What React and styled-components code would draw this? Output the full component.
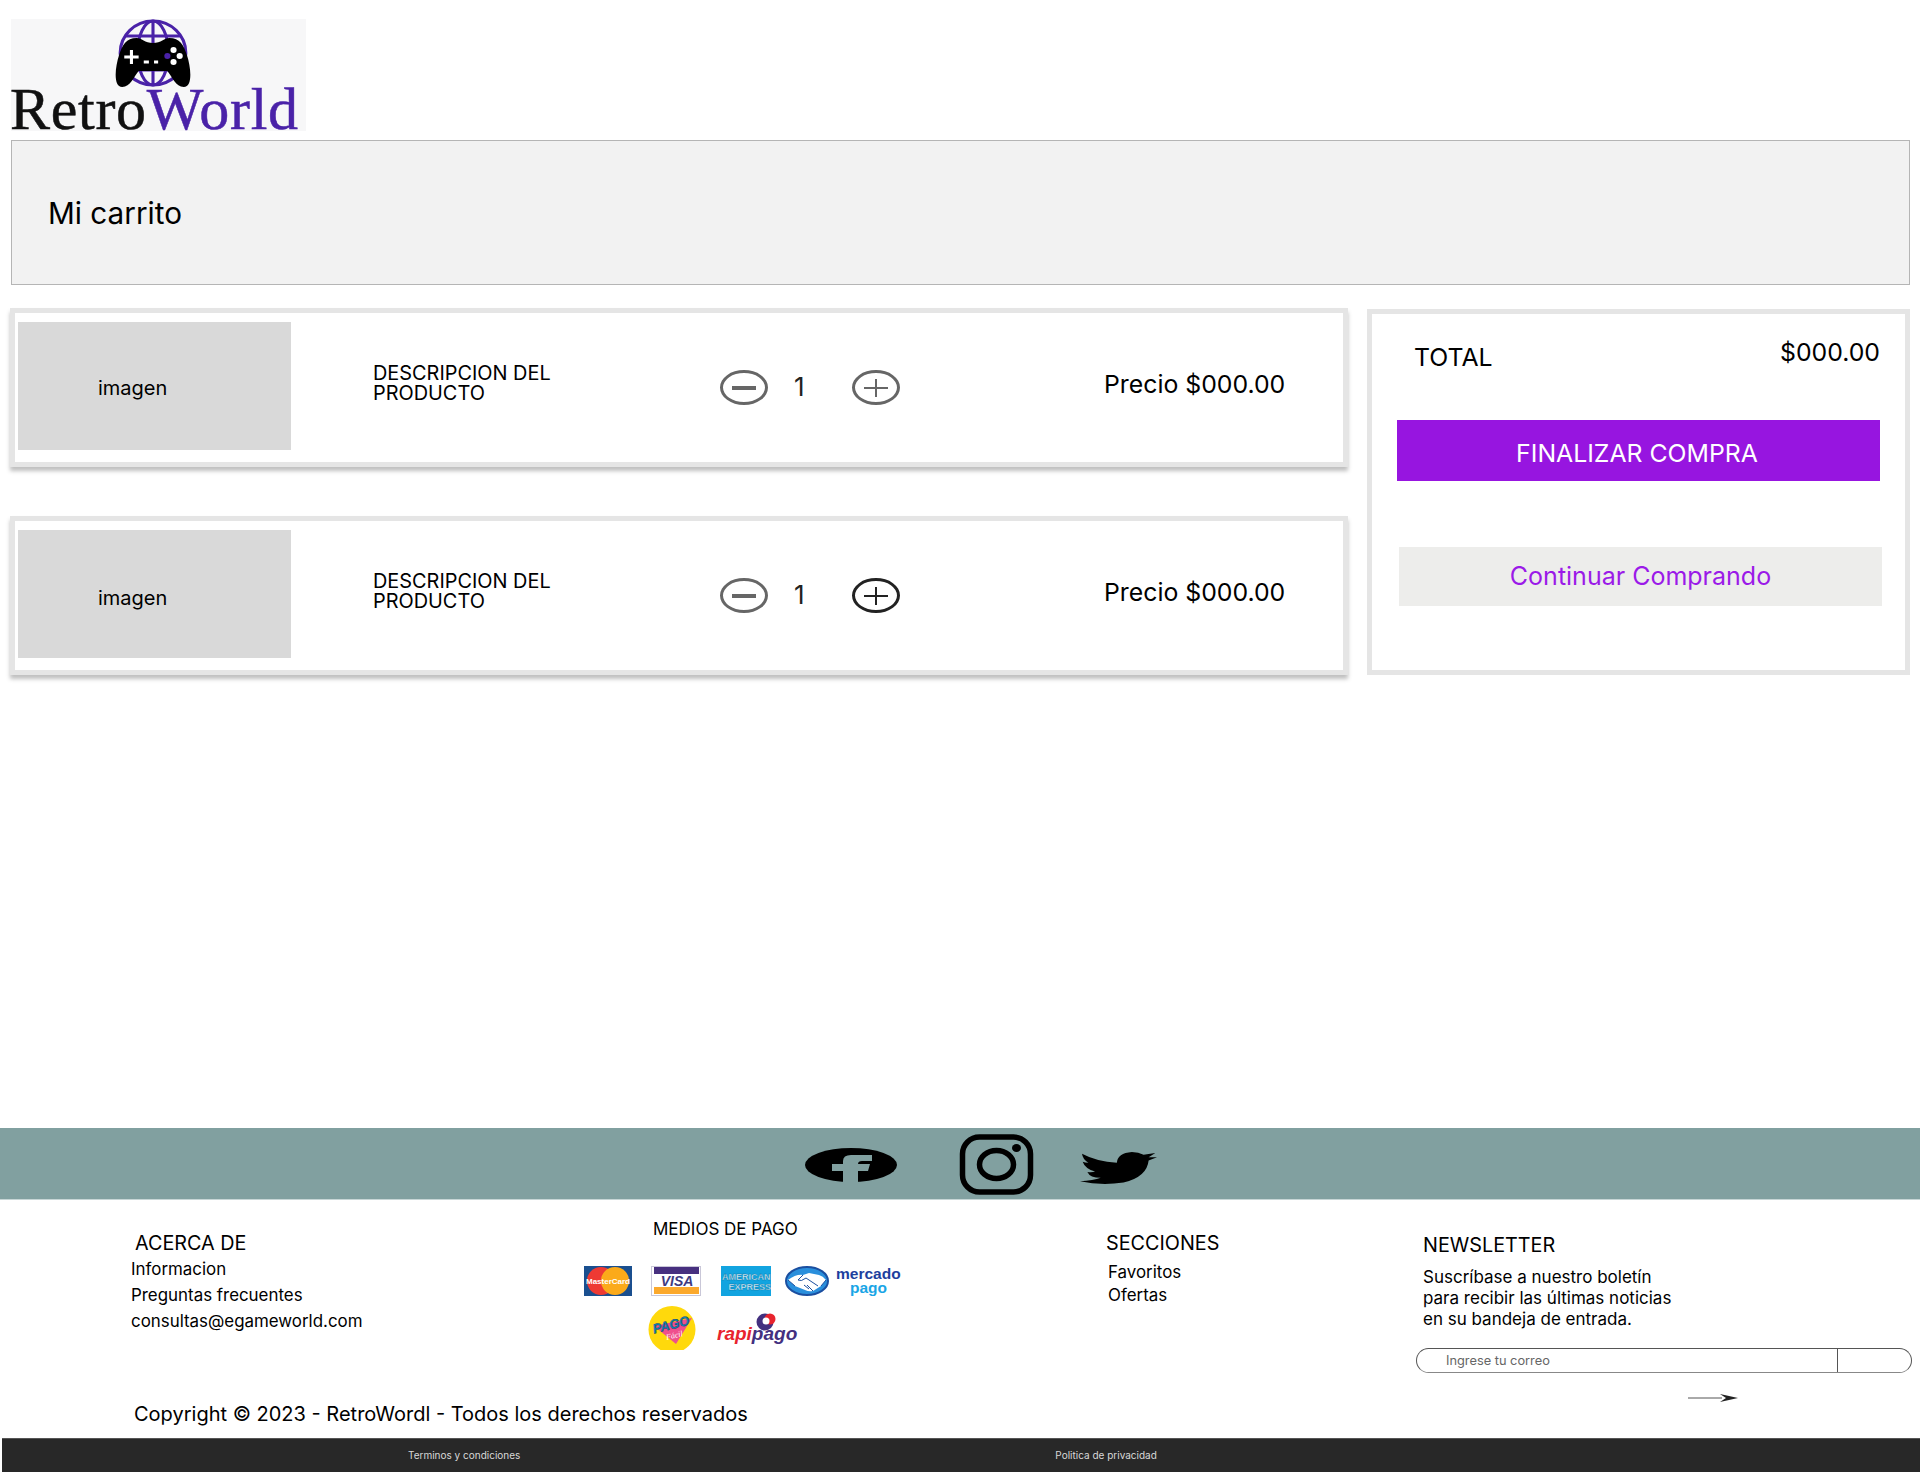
import React from "react";
import styled, { createGlobalStyle } from "styled-components";

const GlobalStyle = createGlobalStyle`
  html, body {
    margin: 0;
    padding: 0;
    background: #fff;
  }
  body {
    font-family: Inter, "Noto Sans", sans-serif;
    color: #000;
  }
  * {
    box-sizing: border-box;
  }
`;

const Page = styled.div`
  width: 1920px;
  min-height: 1472px;
  display: flex;
  flex-direction: column;
`;

/* header */
const Header = styled.header`
  padding: 19px 0 0 11px;
`;

const Logo = styled.div`
  width: 295px;
  height: 112px;
  background: #f7f7f8;
  display: flex;
  flex-direction: column;
`;

const LogoMark = styled.svg`
  display: block;
  width: 78px;
  height: 69px;
  margin-left: 103px;
`;

const LogoWord = styled.div`
  margin-left: -1px;
  font-family: "Liberation Serif", serif;
  font-size: 60px;
  line-height: 42px;
  letter-spacing: 0.7px;
  color: #111;
  white-space: nowrap;
  -webkit-text-stroke: 0.5px currentColor;

  span {
    color: #4a22a8;
  }
`;

const TitlePanel = styled.div`
  margin: 9px 0 0 11px;
  width: 1899px;
  height: 145px;
  padding-left: 36px;
  display: flex;
  align-items: center;
  background: #f2f2f2;
  border: 1px solid #b5b5b5;
`;

const Title = styled.h1`
  margin: 0;
  font-size: 29.7px;
  font-weight: 400;
`;

/* cart */
const Content = styled.main`
  margin-top: 23px;
  padding-left: 10px;
  display: flex;
  gap: 19px;
  align-items: flex-start;
`;

const CartList = styled.div`
  width: 1338px;
  display: flex;
  flex-direction: column;
  gap: 49px;
`;

const CartItem = styled.article`
  height: 159px;
  padding-left: 3px;
  display: flex;
  align-items: center;
  background: #fff;
  border: 5px solid #e5e5e5;
  box-shadow: 0 4px 4px rgba(0, 0, 0, 0.25);
`;

const Thumb = styled.div`
  width: 273px;
  height: 128px;
  flex: none;
  align-self: flex-start;
  margin-top: 9px;
  padding: ${(p) => p.$labelDrop}px 0 0 80px;
  display: flex;
  align-items: center;
  background: #d9d9d9;
  font-size: 20px;
`;

const Description = styled.div`
  width: 347px;
  flex: none;
  margin: 0 0 9px 82px;
  font-size: 19.9px;
  line-height: 20px;
`;

const Stepper = styled.div`
  width: 180px;
  flex: none;
  display: flex;
  align-items: center;
`;

const StepButton = styled.button`
  width: 48px;
  height: 35px;
  flex: none;
  padding: 0;
  display: flex;
  align-items: center;
  justify-content: center;
  background: none;
  border: 3px solid ${(p) => p.$color};
  border-radius: 50%;
  color: ${(p) => p.$color};
`;

const StepGlyph = styled.svg`
  display: block;
  width: 26px;
  height: 18px;
`;

const Count = styled.span`
  width: 84px;
  padding: 0 0 3px 26px;
  font-size: 26px;
  color: #222;
`;

const Price = styled.div`
  margin: 0 0 8px 204px;
  font-size: 24.8px;
  white-space: nowrap;
`;

const Summary = styled.aside`
  width: 543px;
  height: 366px;
  margin-top: 1px;
  background: #fff;
  border: 5px solid #e5e5e5;
`;

const TotalRow = styled.div`
  margin-top: 23px;
  padding: 0 25px 0 42px;
  display: flex;
  justify-content: space-between;
  align-items: flex-start;
  font-size: 24.8px;
  line-height: 30px;
`;

const TotalLabel = styled.span`
  padding-top: 5px;
`;

const ActionButton = styled.button`
  display: block;
  width: 483px;
  height: ${(p) => p.$height}px;
  margin: ${(p) => p.$top}px 0 0 ${(p) => p.$left}px;
  padding: ${(p) => p.$pad};
  background: ${(p) => p.$bg};
  color: ${(p) => p.$color};
  border: 0;
  font-family: inherit;
  font-size: ${(p) => p.$size}px;
`;

/* footer */
const Footer = styled.footer`
  margin-top: auto;
`;

const SocialBar = styled.div`
  height: 72px;
  padding-left: 805px;
  display: flex;
  align-items: flex-start;
  background: #81a0a0;
  border-bottom: 1px solid #c7d6d6;
`;

const SocialIcon = styled.svg`
  display: block;
  flex: none;
  width: ${(p) => p.$w}px;
  height: ${(p) => p.$h}px;
  margin: ${(p) => p.$top}px 0 0 ${(p) => p.$left || 0}px;
`;

const FooterGrid = styled.div`
  height: 238px;
  padding-left: 131px;
  display: grid;
  grid-template-columns: 453px 522px 310px 504px;
  grid-template-rows: 190px 48px;
`;

const Column = styled.section`
  padding-top: ${(p) => p.$top}px;
`;

const ColumnTitle = styled.h3`
  margin: 0;
  padding-left: ${(p) => p.$indent || 0}px;
  font-size: 19.8px;
  line-height: 24px;
  font-weight: 400;
`;

const LinkList = styled.ul`
  list-style: none;
  margin: ${(p) => p.$top || 0}px 0 0;
  padding: 0 0 0 ${(p) => p.$indent || 0}px;
  font-size: 16.9px;
  line-height: ${(p) => p.$line}px;
`;

const PayTitle = styled.h3`
  margin: 0;
  padding-left: 69px;
  font-size: 17px;
  line-height: 22px;
  font-weight: 400;
`;

const PayGrid = styled.div`
  margin-top: 26px;
  display: grid;
  grid-template-columns: 67px 70px 64px auto;
  grid-template-rows: 40px 44px;
  justify-items: start;
`;

const PayLogo = styled.svg`
  display: block;
  width: ${(p) => p.$w}px;
  height: ${(p) => p.$h}px;
  grid-column: ${(p) => p.$col};
  grid-row: ${(p) => p.$row};
  margin: ${(p) => p.$top || 0}px 0 0 ${(p) => p.$left || 0}px;
`;

const Newsletter = styled.section`
  grid-column: 4;
  grid-row: 1 / span 2;
  padding-top: 33px;
`;

const NewsText = styled.p`
  margin: 10px 0 0;
  padding-left: 7px;
  font-size: 17px;
  line-height: 21px;
`;

const SubscribeForm = styled.form`
  width: 496px;
  height: 25px;
  margin-top: 18px;
  display: flex;
  border: 1px solid #555;
  border-bottom-color: #888;
  border-radius: 13px;
  overflow: hidden;
`;

const EmailInput = styled.input`
  width: 421px;
  height: 100%;
  padding: 0 0 0 29px;
  background: none;
  border: 0;
  border-right: 1px solid #555;
  outline: none;
  font-family: inherit;
  font-size: 12.8px;

  &::placeholder {
    color: #666;
    opacity: 1;
  }
`;

const SendButton = styled.button`
  flex: 1;
  padding: 0;
  background: none;
  border: 0;
`;

const Arrow = styled.svg`
  display: block;
  width: 50px;
  height: 14px;
  margin: 18px 0 0 272px;
`;

const Copyright = styled.p`
  grid-column: 1 / span 3;
  grid-row: 2;
  margin: 0;
  padding-left: 3px;
  font-size: 20px;
  line-height: 48px;
`;

const LegalBar = styled.div`
  height: 34px;
  margin-left: 2px;
  padding: 0 0 2px 406px;
  display: flex;
  align-items: center;
  gap: 535px;
  background: #282828;
  border-top: 1px solid #555;
  color: #d8d8d8;
  font-size: 10px;
`;

const MinusGlyph = () => (
  <StepGlyph viewBox="0 0 26 18">
    <rect x="1" y="7" width="24" height="4" fill="currentColor" />
  </StepGlyph>
);

const PlusGlyph = () => (
  <StepGlyph viewBox="0 0 26 18">
    <path d="M1 9H25M13 0V18" stroke="currentColor" strokeWidth="2" fill="none" />
  </StepGlyph>
);

const Item = ({ labelDrop, plusColor }) => (
  <CartItem>
    <Thumb $labelDrop={labelDrop}>imagen</Thumb>
    <Description>
      DESCRIPCION DEL
      <br />
      PRODUCTO
    </Description>
    <Stepper>
      <StepButton $color="#666">
        <MinusGlyph />
      </StepButton>
      <Count>1</Count>
      <StepButton $color={plusColor}>
        <PlusGlyph />
      </StepButton>
    </Stepper>
    <Price>Precio $000.00</Price>
  </CartItem>
);

const App = () => (
  <Page>
    <GlobalStyle />
    <Header>
      <Logo>
        <LogoMark viewBox="0 0 76 69" preserveAspectRatio="none">
          <g fill="none" stroke="#4a22a8" strokeWidth="3">
            <circle cx="38" cy="34" r="32" />
            <ellipse cx="38" cy="34" rx="15" ry="32" />
            <path d="M38 2V66M11 17H65M11 51H65" />
          </g>
          <path
            d="M22 19C27 19 30 24 38 24C46 24 49 19 54 19C64 19 68 26 71 36C75 48 77 68 68 68C60 68 57 58 52 52L24 52C19 58 16 68 8 68C-1 68 1 48 5 36C8 26 12 19 22 19Z"
            fill="#000"
          />
          <path d="M10 38H24M17 31V45" stroke="#fff" strokeWidth="3" />
          <path d="M29 43H34M39 43H43" stroke="#fff" strokeWidth="3" />
          <circle cx="58" cy="31" r="3" fill="#fff" />
          <circle cx="58" cy="43" r="3" fill="#fff" />
          <circle cx="64" cy="37" r="3" fill="#fff" />
          <circle cx="52" cy="37" r="3" fill="#4a22a8" />
        </LogoMark>
        <LogoWord>
          Retro<span>World</span>
        </LogoWord>
      </Logo>
    </Header>

    <TitlePanel>
      <Title>Mi carrito</Title>
    </TitlePanel>

    <Content>
      <CartList>
        <Item labelDrop={4} plusColor="#666" />
        <Item labelDrop={8} plusColor="#222" />
      </CartList>
      <Summary>
        <TotalRow>
          <TotalLabel>TOTAL</TotalLabel>
          <span>$000.00</span>
        </TotalRow>
        <ActionButton $top={48} $left={25} $height={61} $pad="4px 3px 0 0" $size={24.8} $bg="#9715e0" $color="#fff">
          FINALIZAR COMPRA
        </ActionButton>
        <ActionButton $top={66} $left={27} $height={59} $pad="0 0 2px" $size={25} $bg="#ededeb" $color="#9b1ae8">
          Continuar Comprando
        </ActionButton>
      </Summary>
    </Content>

    <Footer>
      <SocialBar>
        <SocialIcon viewBox="0 0 92 34" preserveAspectRatio="none" $w={92} $h={34} $top={20}>
          <ellipse cx="46" cy="17" rx="46" ry="17" fill="#000" />
          <path
            d="M38 34V23H27V16H38V13Q38 7 46 7H67V13H57Q53 13 53 16H65L63 23H53V34Z"
            fill="#81a0a0"
          />
        </SocialIcon>
        <SocialIcon viewBox="0 0 74 61" $w={75} $h={61} $top={6} $left={62}>
          <g fill="none" stroke="#000" strokeWidth="5.5">
            <rect x="3" y="3" width="68" height="55" rx="17" />
            <ellipse cx="37" cy="30.5" rx="17" ry="14" />
          </g>
          <ellipse cx="57" cy="14" rx="4.5" ry="4" fill="#000" />
        </SocialIcon>
        <SocialIcon viewBox="960 97 230 93" preserveAspectRatio="none" $w={77} $h={32} $top={24} $left={46}>
          <path
            d="M960 182Q1000 180 1022 172Q990 172 982 155Q995 157 1005 154Q975 145 968 125Q975 128 985 128Q968 118 966 102Q1010 125 1070 128Q1072 100 1115 97Q1135 97 1150 105L1185 100L1165 112L1190 112L1165 122Q1160 170 1090 186Q1020 195 960 182Z"
            fill="#000"
          />
        </SocialIcon>
      </SocialBar>

      <FooterGrid>
        <Column $top={31}>
          <ColumnTitle $indent={4}>ACERCA DE</ColumnTitle>
          <LinkList $top={1} $line={26}>
            <li>Informacion</li>
            <li>Preguntas frecuentes</li>
            <li>consultas@egameworld.com</li>
          </LinkList>
        </Column>

        <Column $top={18}>
          <PayTitle>MEDIOS DE PAGO</PayTitle>
          <PayGrid>
            <PayLogo viewBox="0 0 48 30" $w={48} $h={30} $col={1} $row={1}>
              <rect width="48" height="30" fill="#1a4f8f" />
              <circle cx="17" cy="15" r="14" fill="#ee3a33" />
              <circle cx="31" cy="15" r="14" fill="#fbaa1a" />
              <text x="24" y="18" textAnchor="middle" fontFamily="Liberation Sans" fontSize="8" fontWeight="700" fill="#fff">
                MasterCard
              </text>
            </PayLogo>
            <PayLogo viewBox="0 0 50 30" $w={50} $h={30} $col={2} $row={1}>
              <rect x="0.5" y="0.5" width="49" height="29" fill="#fff" stroke="#c9c7d8" />
              <rect x="3" y="1" width="45" height="7" fill="#47307f" />
              <rect x="3" y="21" width="45" height="7" fill="#fba92c" />
              <text x="26" y="19.5" textAnchor="middle" fontFamily="Liberation Sans" fontSize="14" fontWeight="700" fontStyle="italic" fill="#3f3a7f">
                VISA
              </text>
            </PayLogo>
            <PayLogo viewBox="0 0 50 30" $w={50} $h={30} $col={3} $row={1}>
              <rect width="50" height="30" fill="#12a4e0" />
              <text x="1" y="14" fontFamily="Liberation Sans" fontSize="9" fontWeight="700" fill="#d9f1fb" stroke="#0b6f9c" strokeWidth="0.3">
                AMERICAN
              </text>
              <text x="7.5" y="24" fontFamily="Liberation Sans" fontSize="9" fontWeight="700" fill="#d9f1fb" stroke="#0b6f9c" strokeWidth="0.3">
                EXPRESS
              </text>
            </PayLogo>
            <PayLogo viewBox="0 0 120 30" $w={120} $h={30} $col={4} $row={1}>
              <ellipse cx="22" cy="15" rx="21" ry="14" fill="#2a8fdc" stroke="#1b4fa0" strokeWidth="2" />
              <path d="M3 14Q11 8 18 9L24 7L34 9Q38 10 41 14L36 20L28 25Q24 26 20 24L10 20Z" fill="#fff" />
              <path d="M18 9L13 14Q16 16 21 12L33 20M28 25L22 19M24 23L19 19M10 20L3 14M36 20L41 14" fill="none" stroke="#1b4fa0" strokeWidth="1" />
              <text x="51" y="12.5" fontFamily="Liberation Sans" fontSize="15.5" fontWeight="700" fill="#1d3f9e">
                mercado
              </text>
              <text x="65" y="26.5" fontFamily="Liberation Sans" fontSize="15.5" fontWeight="700" fill="#19a5e6">
                pago
              </text>
            </PayLogo>
            <PayLogo viewBox="0 0 48 44" $w={48} $h={44} $col={2} $row={2} $left={-3}>
              <circle cx="24" cy="23.5" r="23.5" fill="#ffd90c" />
              <path d="M6 20L44 12L28 38Z" fill="#ef4f8d" />
              <text x="24" y="23" textAnchor="middle" transform="rotate(-14 24 23)" fontFamily="Liberation Sans" fontSize="13" fontWeight="700" fontStyle="italic" fill="#0e86b6" stroke="#12355f" strokeWidth="0.4">
                PAGO
              </text>
              <text x="27" y="32" textAnchor="middle" transform="rotate(-14 27 32)" fontFamily="Liberation Serif" fontSize="8" fontStyle="italic" fill="#fff">
                Fácil
              </text>
            </PayLogo>
            <PayLogo viewBox="0 0 84 32" $w={84} $h={32} $col={3} $row={2} $top={7} $left={-4}>
              <circle cx="48" cy="9" r="8.5" fill="#43307f" />
              <circle cx="53" cy="6" r="5.5" fill="#e8242e" />
              <circle cx="49" cy="8" r="3.5" fill="#fff" />
              <text x="0" y="27" fontFamily="Liberation Sans" fontSize="19" fontWeight="700" fontStyle="italic">
                <tspan fill="#e8242e">rapi</tspan>
                <tspan fill="#43307f">pago</tspan>
              </text>
            </PayLogo>
          </PayGrid>
        </Column>

        <Column $top={31}>
          <ColumnTitle>SECCIONES</ColumnTitle>
          <LinkList $top={6} $indent={2} $line={23}>
            <li>Favoritos</li>
            <li>Ofertas</li>
          </LinkList>
        </Column>

        <Newsletter>
          <ColumnTitle $indent={7}>NEWSLETTER</ColumnTitle>
          <NewsText>
            Suscríbase a nuestro boletín
            <br />
            para recibir las últimas noticias
            <br />
            en su bandeja de entrada.
          </NewsText>
          <SubscribeForm>
            <EmailInput placeholder="Ingrese tu correo" />
            <SendButton type="button" aria-label="Enviar" />
          </SubscribeForm>
          <Arrow viewBox="0 0 50 14">
            <path d="M0 7H34" stroke="#555" strokeWidth="1" fill="none" />
            <path d="M32 3L50 7L32 11L38 7Z" fill="#222" />
          </Arrow>
        </Newsletter>

        <Copyright>Copyright © 2023 - RetroWordl - Todos los derechos reservados</Copyright>
      </FooterGrid>

      <LegalBar>
        <span>Terminos y condiciones</span>
        <span>Politica de privacidad</span>
      </LegalBar>
    </Footer>
  </Page>
);

export default App;
